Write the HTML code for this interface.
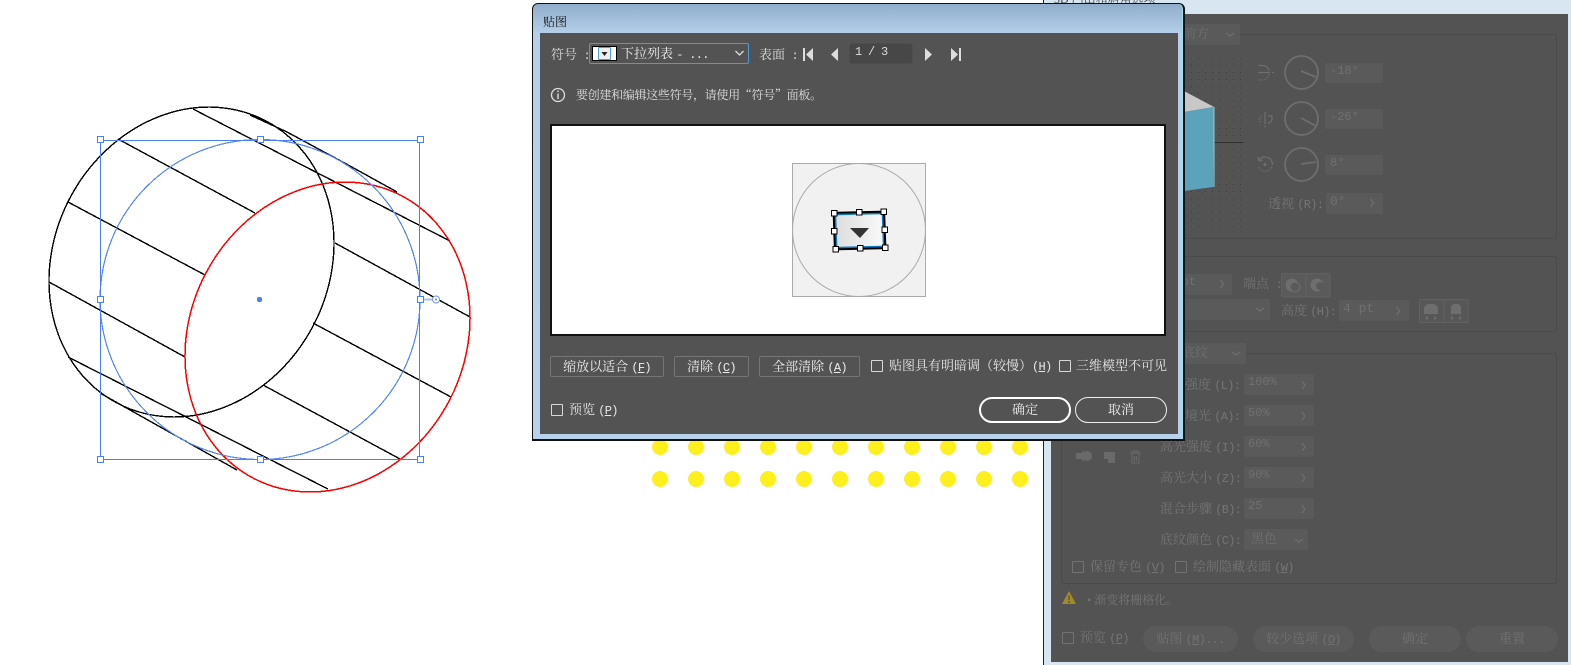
<!DOCTYPE html>
<html><head><meta charset="utf-8"><style>
html,body{margin:0;padding:0;background:#fff}
#p{position:relative;width:1571px;height:665px;overflow:hidden;background:#fff;font-family:"Liberation Serif","Noto Serif CJK SC",serif}
#p div,#p span.a{position:absolute;box-sizing:border-box}
.t{white-space:pre;line-height:14px;height:14px;font-size:13px;color:#e8e8e8}
.s{font-size:12px}
.d{color:#757575}
.m{font-family:"Liberation Mono","Noto Serif CJK SC",monospace;font-size:12px;letter-spacing:-.7px}
.b{border:1px solid #757575;border-radius:2px;color:#eee;font-size:13px;text-align:center;line-height:19px;white-space:pre}
.c{width:12px;height:12px;border:1px solid #d8d8d8;border-radius:1px}
.cd{width:12px;height:12px;border:1px solid #727272;border-radius:1px}
.f{background:#5a5a5a;border-radius:2px;color:#707070;font-family:"Liberation Mono","Noto Serif CJK SC",monospace;font-size:12px;line-height:17px;white-space:pre;padding-left:5px}
.r{background:#5a5a5a;border-radius:13px;color:#727272;font-size:13px;text-align:center;line-height:26px;white-space:pre}
.fs{border:1px solid #4a4a4a;border-radius:3px}
</style></head><body><div id="p">

<svg style="position:absolute;left:0;top:0" width="1040" height="665" viewBox="0 0 1040 665" fill="none">
<g fill="#ffef1c">
<circle cx="660" cy="447" r="8"/><circle cx="696" cy="447" r="8"/><circle cx="732" cy="447" r="8"/><circle cx="768" cy="447" r="8"/><circle cx="804" cy="447" r="8"/><circle cx="840" cy="447" r="8"/><circle cx="876" cy="447" r="8"/><circle cx="912" cy="447" r="8"/><circle cx="948" cy="447" r="8"/><circle cx="984" cy="447" r="8"/><circle cx="1020" cy="447" r="8"/>
<circle cx="660" cy="479" r="8"/><circle cx="696" cy="479" r="8"/><circle cx="732" cy="479" r="8"/><circle cx="768" cy="479" r="8"/><circle cx="804" cy="479" r="8"/><circle cx="840" cy="479" r="8"/><circle cx="876" cy="479" r="8"/><circle cx="912" cy="479" r="8"/><circle cx="948" cy="479" r="8"/><circle cx="984" cy="479" r="8"/><circle cx="1020" cy="479" r="8"/>
</g>
<g stroke="#000" stroke-width="1.400" shape-rendering="crispEdges">
<ellipse cx="191.500" cy="262" rx="159.500" ry="137.400" transform="rotate(-62.200 191.500 262)"/>
<path d="M250 115L287 132L350 166L397 192"/>
<path d="M193 109L450 241"/>
<path d="M118 139L255 213M335 243L470 317"/>
<path d="M68 202L205 275M313 323L451 397"/>
<path d="M49 282L185 357M263 385L400 459"/>
<path d="M68 357L328 489"/>
<path d="M100 393L130 410L237 470"/>
</g>
<ellipse cx="327.500" cy="337" rx="159.500" ry="137.400" transform="rotate(-62.200 327.500 337)" stroke="#f00" stroke-width="1.500" shape-rendering="crispEdges"/>
<circle cx="260" cy="299.500" r="160" stroke="#5585f5" stroke-width="1.200" shape-rendering="crispEdges"/>
<rect x="100.500" y="140.500" width="319" height="319" stroke="#4a80f5" stroke-width="1"/>
<path d="M420 299.500H432" stroke="#a9c0f8" stroke-width="2"/>
<circle cx="436" cy="299.500" r="3.500" stroke="#6f96f5" fill="#fff"/><circle cx="436" cy="299.500" r="1" fill="#4a80f5"/>
<g fill="#fff" stroke="#4a80f5">
<rect x="97.500" y="136.500" width="6" height="6"/><rect x="257.500" y="136.500" width="6" height="6"/><rect x="417.500" y="136.500" width="6" height="6"/>
<rect x="97.500" y="296.500" width="6" height="6"/><rect x="417.500" y="296.500" width="6" height="6"/>
<rect x="97.500" y="456.500" width="6" height="6"/><rect x="257.500" y="456.500" width="6" height="6"/><rect x="417.500" y="456.500" width="6" height="6"/>
</g>
<rect x="257" y="297" width="5" height="5" rx="2" fill="#4a80f5"/>
</svg>

<!-- background panel -->
<div style="left:1043px;top:0;width:528px;height:665px;background:#d8e6f2;border-left:1px solid #222"></div>
<div class="t s" style="left:1054px;top:-8px;color:#444">3D 凸出和斜角选项</div>
<div style="left:1051px;top:14px;width:517px;height:648px;background:#535353"></div>

<div class="fs" style="left:1061px;top:34px;width:496px;height:205px"></div>
<div class="fs" style="left:1061px;top:256px;width:496px;height:76px"></div>
<div class="fs" style="left:1061px;top:353px;width:496px;height:231px"></div>

<div class="f" style="left:1170px;top:24px;width:70px;height:21px;line-height:21px;font-size:13px;padding-left:13px">前方</div>
<svg style="position:absolute;left:1051px;top:14px" width="517" height="648" viewBox="1051 14 517 648" fill="none">
<defs><pattern id="dp" x="1184" y="58" width="7" height="7" patternUnits="userSpaceOnUse"><rect width="1" height="1" fill="#3c3c3c"/></pattern></defs>
<rect x="1150" y="58" width="94" height="170" fill="url(#dp)"/>
<path d="M1150 142.500H1243" stroke="#2e2e2e"/>
<path d="M1184 91L1214 107L1184 112Z" fill="#c8c8c8"/>
<path d="M1184 112L1214 107L1213 187L1184 191Z" fill="#5ba3bb"/>
<path d="M1214 107V187" stroke="#a8c4cc"/>
<g stroke="#6e6e6e" stroke-width="1.800">
<circle cx="1301.500" cy="72.500" r="16.500"/><circle cx="1301.500" cy="118.500" r="16.500"/><circle cx="1301.500" cy="164.500" r="16.500"/>
<path d="M1301 71L1316 77M1301 118L1316 126M1301 164L1316 162"/>
</g>
<g stroke="#6e6e6e" stroke-width="1.300">
<path d="M1258 65.500h5a7 7 0 0 1 6 5M1258 72.500H1270M1272 72.500h2"/>
<path d="M1269 74a7 7 0 0 1-6 6h-5" stroke-dasharray="1.500 1.500"/>
<path d="M1265 112V124M1265 125.500v2M1268 116h4v3a4 4 0 0 1-4 4"/>
<path d="M1262 116a5 4 0 0 0 0 7" stroke-dasharray="1.500 1.500"/>
<path d="M1259 160a7.500 7.500 0 0 1 13.500 5M1258 157l1 4 4-1"/>
<path d="M1272 167a7.500 7.500 0 0 1-13.500 0" stroke-dasharray="1.500 1.500"/>
</g>
<circle cx="1265" cy="164.500" r="1.500" fill="#6e6e6e"/>
<rect x="1281.500" y="273.500" width="24.500" height="23.500" rx="1" fill="#5a5a5a" stroke="#616161"/>
<rect x="1306" y="273.500" width="24" height="23.500" rx="1" fill="#5a5a5a" stroke="#616161"/>
<circle cx="1292" cy="285" r="6.500" fill="#6e6e6e"/><circle cx="1295" cy="287" r="5" fill="#5a5a5a" stroke="#6e6e6e"/>
<circle cx="1317" cy="285" r="6.500" fill="#6e6e6e"/><circle cx="1320" cy="286" r="4" fill="#5a5a5a"/>
<rect x="1419.500" y="299.500" width="24.500" height="23" rx="1" fill="#575757" stroke="#616161"/>
<rect x="1444" y="299.500" width="24" height="23" rx="1" fill="#575757" stroke="#616161"/>
<path d="M1424 314v-5a5 5 0 0 1 5-5h4a5 5 0 0 1 5 5v5zM1451 314v-6a4 4 0 0 1 4-4h2a4 4 0 0 1 4 4v6z" fill="#6e6e6e"/>
<path d="M1428 316l-3 2 3 2zM1434 316l3 2-3 2zM1451 316l3 2-3 2zM1461 316l-3 2 3 2z" fill="#6e6e6e"/>
<path d="M1076 453h6v-3l5 6-5 6v-3h-6z" fill="#6a6a6a"/><circle cx="1087" cy="456" r="5" fill="#6a6a6a"/>
<path d="M1104 452h11v11h-7v-4h-4z" fill="#6a6a6a"/>
<path d="M1130 453h11M1133 453v-2h5v2M1132 454v9h7v-9M1134.500 456v5M1136.500 456v5" stroke="#6a6a6a"/>
<path d="M1069 591L1076 604H1062Z" fill="#a08a2a"/><path d="M1069 595.500V600M1069 601V603" stroke="#3c3c3c"/>
</svg>

<div class="f" style="left:1325px;top:63px;width:58px;height:20px">-18°</div>
<div class="f" style="left:1325px;top:109px;width:58px;height:20px">-26°</div>
<div class="f" style="left:1325px;top:155px;width:58px;height:20px">8°</div>
<div class="t d" style="left:1268px;top:197px">透视 <span class="m">(R):</span></div>
<div class="f" style="left:1326px;top:193px;width:57px;height:21px;padding-left:4px;font-size:13px">0°</div>
<div class="f" style="left:1170px;top:274px;width:62px;height:21px;text-align:right;padding-right:36px">pt</div>
<div class="t d" style="left:1243px;top:277px">端点<span class="m"> :</span></div>
<div class="f" style="left:1170px;top:299px;width:100px;height:21px"></div>
<div class="t d" style="left:1281px;top:304px">高度 <span class="m">(H):</span></div>
<div class="f" style="left:1339px;top:300px;width:70px;height:21px;padding-left:4px;font-size:13px">4 pt</div>
<div class="f" style="left:1170px;top:343px;width:76px;height:21px;font-size:13px;line-height:21px;padding-left:12px">底纹</div>

<div class="t d" style="left:1185px;top:378px">强度 <span class="m">(L):</span></div>
<div class="f" style="left:1244px;top:374px;width:70px;height:21px;padding-left:4px">100%</div>
<div class="t d" style="left:1185px;top:409px">境光 <span class="m">(A):</span></div>
<div class="f" style="left:1244px;top:405px;width:70px;height:21px;padding-left:4px">50%</div>
<div class="t d" style="left:1160px;top:440px">高光强度 <span class="m">(I):</span></div>
<div class="f" style="left:1244px;top:436px;width:70px;height:21px;padding-left:4px">60%</div>
<div class="t d" style="left:1160px;top:471px">高光大小 <span class="m">(Z):</span></div>
<div class="f" style="left:1244px;top:467px;width:70px;height:21px;padding-left:4px">90%</div>
<div class="t d" style="left:1160px;top:502px">混合步骤 <span class="m">(B):</span></div>
<div class="f" style="left:1244px;top:498px;width:70px;height:21px;padding-left:4px">25</div>
<div class="t d" style="left:1160px;top:533px">底纹颜色 <span class="m">(C):</span></div>
<div class="f" style="left:1244px;top:529px;width:64px;height:21px;padding-left:7px;font-size:13px;line-height:21px">黑色</div>

<div class="cd" style="left:1072px;top:561px"></div>
<div class="t d" style="left:1090px;top:560px">保留专色 <span class="m">(<u>V</u>)</span></div>
<div class="cd" style="left:1175px;top:561px"></div>
<div class="t d" style="left:1193px;top:560px">绘制隐藏表面 <span class="m">(<u>W</u>)</span></div>
<div class="t s d" style="left:1087px;top:593px">• 渐变将栅格化。</div>
<div class="cd" style="left:1062px;top:632px"></div>
<div class="t d" style="left:1080px;top:631px">预览 <span class="m">(<u>P</u>)</span></div>
<div class="r" style="left:1143px;top:626px;width:95px;height:26px">贴图 <span class="m">(<u>M</u>)...</span></div>
<div class="r" style="left:1253px;top:626px;width:101px;height:26px">较少选项 <span class="m">(<u>O</u>)</span></div>
<div class="r" style="left:1369px;top:626px;width:92px;height:26px">确定</div>
<div class="r" style="left:1466px;top:626px;width:92px;height:26px">重置</div>

<!-- chevrons above the fields -->
<svg style="position:absolute;left:1051px;top:14px" width="517" height="648" viewBox="1051 14 517 648" fill="none" stroke="#6e6e6e" stroke-width="1.300">
<path d="M1370.500 199l3 4-3 4M1220.500 280l3 4-3 4M1396.500 307l3 4-3 4"/>
<path d="M1302 381l3 4-3 4M1302 412l3 4-3 4M1302 443l3 4-3 4M1302 474l3 4-3 4M1302 505l3 4-3 4"/>
<path d="M1226 33l4 3 4-3M1256 308l4 3 4-3M1232 352l4 3 4-3M1295 539l4 3 4-3"/>
</svg>

<!-- dialog -->
<div style="left:532px;top:3px;width:653px;height:438px;background:linear-gradient(#8fadcb 0,#b6d0ea 30px,#b8d2ec 100%);border:1px solid #111;border-right:2px solid #111;border-bottom:2px solid #111;border-radius:6px 6px 0 0;box-shadow:inset -1px 0 0 #9fe0f5;z-index:3"></div>
<div style="z-index:4;left:0;top:0;width:1571px;height:665px">
<div class="t s" style="left:543px;top:15px;color:#111">贴图</div>
<div style="left:540px;top:33px;width:638px;height:401px;background:#535353"></div>

<div class="t" style="left:551px;top:48px;color:#ddd">符号<span class="m"> :</span></div>
<div style="left:589px;top:43px;width:160px;height:21px;border:1px solid #4a9ae0;border-radius:2px"></div>
<div style="left:592px;top:46px;width:25px;height:15px;background:#fff;border:1px solid #000"></div>
<div style="left:598px;top:47px;width:13px;height:13px;background:#eee;border:1px solid #4aa0e0;border-radius:1px"></div>
<div class="t" style="left:621px;top:47px;color:#eee">下拉列表 <span class="m">- ...</span></div>
<div class="t" style="left:759px;top:48px;color:#ddd">表面<span class="m"> :</span></div>
<div style="left:849px;top:43px;width:64px;height:21px;background:#474747;border:1px solid #4e4e4e;border-radius:3px"></div>
<div class="t m" style="left:855px;top:45px;color:#ddd">1 / 3</div>

<svg style="position:absolute;left:540px;top:33px" width="638" height="401" viewBox="540 33 638 401" fill="none">
<path d="M735.500 51l4 4 4-4" stroke="#ddd" stroke-width="1.300"/>
<path d="M601.500 52h6l-3 4z" fill="#222"/>
<path d="M803 48h2v13h-2zM813 48v13l-7-6.500zM838 48v13l-7-6.500zM925 48l7 6.500-7 6.500zM951 48l7 6.500-7 6.500zM959 48h2v13h-2z" fill="#ddd"/>
<circle cx="558" cy="95" r="6.500" stroke="#ddd" stroke-width="1.300"/>
<path d="M558 93.500V99M558 90.500V92" stroke="#ddd" stroke-width="1.400"/>
</svg>
<div class="t s" style="left:576px;top:88px;color:#e0e0e0;font-family:'Noto Serif CJK SC',serif;letter-spacing:-.3px">要创建和编辑这些符号，请使用“符号”面板。</div>

<div style="left:550px;top:124px;width:616px;height:212px;background:#fff;border:2px solid #111"></div>
<svg style="position:absolute;left:550px;top:124px" width="616" height="212" viewBox="550 124 616 212" fill="none">
<g transform="translate(1 0)">
<rect x="791.500" y="163.500" width="133" height="133" fill="#f1f1f1" stroke="#aaa"/>
<circle cx="858" cy="230" r="66.500" stroke="#aaa"/>
<defs><linearGradient id="g" x1="0" x2="1" y1="0" y2="0"><stop offset="0" stop-color="#dcdcdc"/><stop offset="1" stop-color="#fafafa"/></linearGradient></defs>
<path d="M836 213L879 212Q883 212 883 216L884 244Q884 248 880 248L838 249Q834 249 834 245L833 216Q833 213 836 213Z" fill="url(#g)" stroke="#000" stroke-width="2.500"/>
<path d="M836 214.500L879 213.500Q881.500 213.500 881.500 216L882.500 244Q882.500 246.500 880 246.500L838 247.500Q835.500 247.500 835.500 245L834.500 216Q834.500 214.500 836 214.500Z" stroke="#0a78c8" stroke-width="1.500"/>
<path d="M849 228H868L859 238Z" fill="#333"/>
<g fill="#fff" stroke="#000">
<rect x="830.500" y="210.500" width="5.500" height="5.500"/><rect x="855.500" y="209.500" width="5.500" height="5.500"/><rect x="880" y="209" width="5.500" height="5.500"/>
<rect x="830.500" y="228.500" width="5.500" height="5.500"/><rect x="881" y="227" width="5.500" height="5.500"/>
<rect x="832" y="246.500" width="5.500" height="5.500"/><rect x="856.500" y="245.500" width="5.500" height="5.500"/><rect x="881.500" y="245" width="5.500" height="5.500"/>
</g>
</g>
</svg>

<div class="b" style="left:550px;top:356px;width:114px;height:21px">缩放以适合 <span class="m">(<u>F</u>)</span></div>
<div class="b" style="left:674px;top:356px;width:75px;height:21px">清除 <span class="m">(<u>C</u>)</span></div>
<div class="b" style="left:759px;top:356px;width:101px;height:21px">全部清除 <span class="m">(<u>A</u>)</span></div>
<div class="c" style="left:871px;top:360px"></div>
<div class="t" style="left:889px;top:359px;font-size:13px">贴图具有明暗调（较慢）<span class="m">(<u>H</u>)</span></div>
<div class="c" style="left:1059px;top:360px"></div>
<div class="t" style="left:1076px;top:359px">三维模型不可见</div>
<div class="c" style="left:551px;top:404px"></div>
<div class="t" style="left:569px;top:403px">预览 <span class="m">(<u>P</u>)</span></div>
<div style="left:979px;top:397px;width:92px;height:26px;border:2px solid #fff;border-radius:13px;color:#eee;font-size:13px;text-align:center;line-height:22px">确定</div>
<div style="left:1075px;top:397px;width:92px;height:26px;border:1px solid #f0f0f0;border-radius:13px;color:#eee;font-size:13px;text-align:center;line-height:24px">取消</div>
</div>
</div></body></html>
